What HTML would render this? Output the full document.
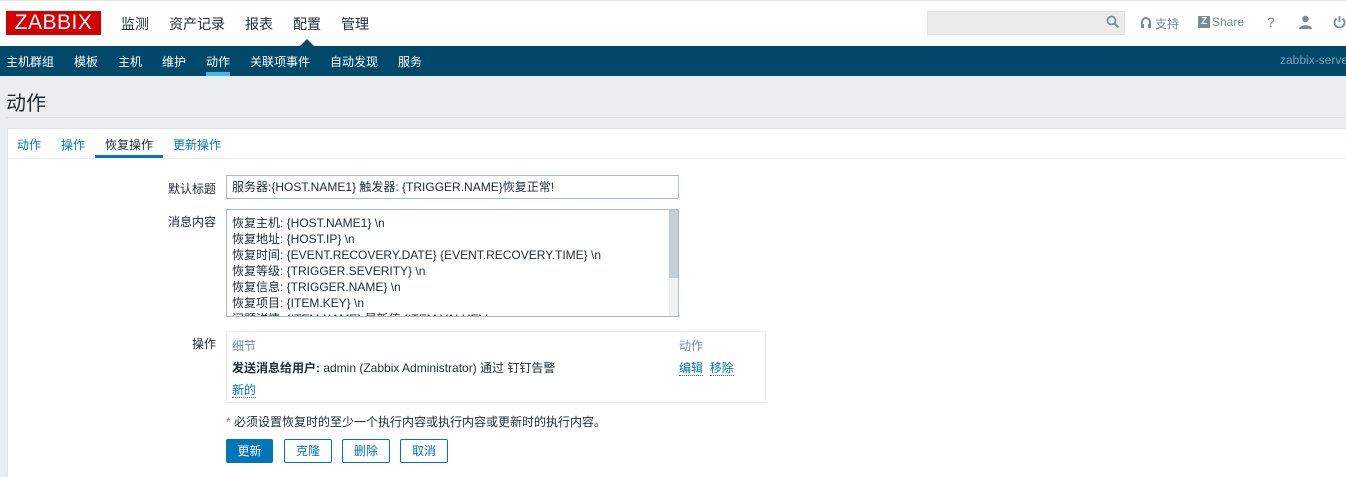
<!DOCTYPE html>
<html><head><meta charset="utf-8"><style>
*{box-sizing:border-box;margin:0;padding:0}
body{width:1346px;height:477px;overflow:hidden;background:#ebeef0;font-family:"Liberation Sans","Noto Sans CJK SC",sans-serif;font-size:12px;color:#1f2c33;position:relative}
.a{position:absolute;white-space:nowrap}
.top{left:0;top:0;width:1346px;height:46px;background:#fff;border-top:1px solid #dfe4e7}
.logo{left:6px;top:11px;width:95px;height:24px;background:#d40000;color:#fff;font-size:21px;line-height:24px;text-align:center;letter-spacing:0.5px}
.mm{top:14px;font-size:14px;color:#1f2c33}
.nav{left:0;top:46px;width:1346px;height:30px;background:#00496b}
.nav span{position:absolute;top:7px;color:#fff;font-size:12px;white-space:nowrap}
.lab{font-size:12px;color:#1f2c33;text-align:right}
.inp{border:1px solid #acbbc2;background:#fff;font-size:12px;padding-left:5px}
.lnk{color:#0275b8;border-bottom:1px dotted #0275b8}
.btn{top:439px;height:24px;border:1px solid #0275b8;color:#0275b8;background:#fff;text-align:center;line-height:22px;font-size:12px;border-radius:2px}
</style></head><body>
<div class="a top"></div>
<div class="a logo">ZABBIX</div>
<div class="a mm" style="left:121px">监测</div>
<div class="a mm" style="left:169px">资产记录</div>
<div class="a mm" style="left:245px">报表</div>
<div class="a mm" style="left:293px">配置</div>
<div class="a mm" style="left:341px">管理</div>
<div class="a" style="left:300px;top:39px;width:0;height:0;border-left:7px solid transparent;border-right:7px solid transparent;border-bottom:7px solid #00496b"></div>
<div class="a" style="left:927px;top:11px;width:198px;height:24px;background:#ebebeb;border:1px solid #e2e2e2"></div>
<svg class="a" style="left:1106px;top:15px" width="14" height="14"><circle cx="5.5" cy="5.5" r="4" fill="none" stroke="#768d99" stroke-width="1.8"/><line x1="8.5" y1="8.5" x2="12.5" y2="12.5" stroke="#768d99" stroke-width="2"/></svg>
<svg class="a" style="left:1140px;top:16px" width="12" height="13"><path d="M2 9V6a4 4 0 0 1 8 0v3" fill="none" stroke="#768d99" stroke-width="2"/><rect x="1" y="8" width="3" height="4" fill="#768d99"/><rect x="8" y="8" width="3" height="4" fill="#768d99"/></svg>
<div class="a" style="left:1155px;top:15px;color:#768d99;font-size:12px">支持</div>
<div class="a" style="left:1198px;top:16px;width:12px;height:12px;background:#768d99;color:#fff;font-size:10px;font-weight:bold;line-height:12px;text-align:center">Z</div>
<div class="a" style="left:1212px;top:15px;color:#768d99;font-size:12px">Share</div>
<div class="a" style="left:1267px;top:14px;color:#768d99;font-size:14px">?</div>
<svg class="a" style="left:1299px;top:15px" width="13" height="14"><circle cx="6.5" cy="4" r="3.2" fill="#768d99"/><path d="M0 14c0-5 13-5 13 0z" fill="#768d99"/></svg>
<svg class="a" style="left:1333px;top:15px" width="13" height="14"><path d="M3.5 3.5a5 5 0 1 0 6 0" fill="none" stroke="#768d99" stroke-width="1.8"/><line x1="6.5" y1="1" x2="6.5" y2="7" stroke="#768d99" stroke-width="1.8"/></svg>
<div class="a nav">
<span style="left:6px">主机群组</span><span style="left:74px">模板</span><span style="left:118px">主机</span><span style="left:162px">维护</span><span style="left:206px">动作</span><span style="left:250px">关联项事件</span><span style="left:330px">自动发现</span><span style="left:398px">服务</span>
<span style="left:1280px;color:#7f9fae">zabbix-server</span>
</div>
<div class="a" style="left:206px;top:72px;width:24px;height:4px;background:#4bb5e6"></div>
<div class="a" style="left:6px;top:87px;font-size:20px;color:#1f2c33">动作</div>
<div class="a" style="left:6px;top:117px;width:1340px;height:1px;background:#dde2e5"></div>
<div class="a" style="left:7px;top:128px;width:1339px;height:349px;background:#fff;border-top:1px solid #dde2e5;border-left:1px solid #dde2e5"></div>
<div class="a" style="left:8px;top:158px;width:1338px;height:1px;background:#ebeef0"></div>
<div class="a" style="left:17px;top:136px;color:#0275b8">动作</div>
<div class="a" style="left:61px;top:136px;color:#0275b8">操作</div>
<div class="a" style="left:105px;top:136px;color:#1f2c33">恢复操作</div>
<div class="a" style="left:173px;top:136px;color:#0275b8">更新操作</div>
<div class="a" style="left:95px;top:155px;width:68px;height:3px;background:#0275b8"></div>
<div class="a lab" style="left:150px;top:180px;width:66px">默认标题</div>
<div class="a lab" style="left:150px;top:213px;width:66px">消息内容</div>
<div class="a lab" style="left:150px;top:335px;width:66px">操作</div>
<div class="a inp" style="left:226px;top:175px;width:453px;height:24px;line-height:22px">服务器:{HOST.NAME1} 触发器: {TRIGGER.NAME}恢复正常!</div>
<div class="a inp" style="left:226px;top:209px;width:453px;height:108px;overflow:hidden;line-height:16px;padding-top:5px">恢复主机: {HOST.NAME1} \n<br>恢复地址: {HOST.IP} \n<br>恢复时间: {EVENT.RECOVERY.DATE} {EVENT.RECOVERY.TIME} \n<br>恢复等级: {TRIGGER.SEVERITY} \n<br>恢复信息: {TRIGGER.NAME} \n<br>恢复项目: {ITEM.KEY} \n<br>问题详情: {ITEM.NAME} 最新值 {ITEM.VALUE} \n</div>
<div class="a" style="left:669px;top:210px;width:9px;height:106px;background:#f0f0f0"></div>
<div class="a" style="left:669px;top:210px;width:9px;height:68px;background:#c6d0d4"></div>
<div class="a" style="left:226px;top:331px;width:540px;height:72px;border:1px solid #ebeef0"></div>
<div class="a" style="left:232px;top:337px;color:#768d99">细节</div>
<div class="a" style="left:679px;top:337px;color:#768d99">动作</div>
<div class="a" style="left:232px;top:359px"><b>发送消息给用户:</b> admin (Zabbix Administrator) 通过 钉钉告警</div>
<div class="a" style="left:679px;top:359px"><span class="lnk">编辑</span>&nbsp; <span class="lnk">移除</span></div>
<div class="a" style="left:232px;top:381px"><span class="lnk">新的</span></div>
<div class="a" style="left:226px;top:413px"><span style="color:#e45959">*</span> 必须设置恢复时的至少一个执行内容或执行内容或更新时的执行内容。</div>
<div class="a btn" style="left:226px;width:47px;background:#0275b8;color:#fff">更新</div>
<div class="a btn" style="left:284px;width:48px">克隆</div>
<div class="a btn" style="left:342px;width:48px">删除</div>
<div class="a btn" style="left:400px;width:48px">取消</div>
</body></html>
